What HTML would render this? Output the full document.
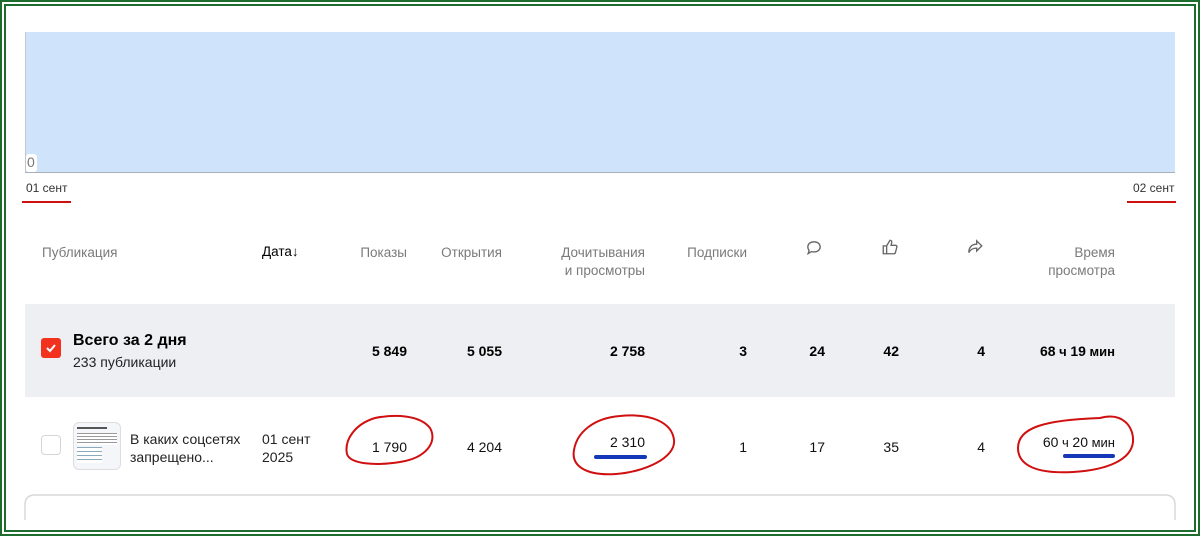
<!DOCTYPE html>
<html><head><meta charset="utf-8"><style>
*{margin:0;padding:0;box-sizing:border-box}
body{width:1200px;height:536px;background:#fff;font-family:"Liberation Sans",sans-serif;position:relative;overflow:hidden}
.a{position:absolute;white-space:nowrap}
.h{color:#7a7a7a;font-size:13.5px;line-height:18px}
.r{text-align:right}
.b{font-weight:bold;font-size:14px;color:#000}
.n{font-size:14px;color:#111}
</style></head><body>
<div class="a" style="left:0;top:0;width:1200px;height:536px;border:2px solid #1d6b2d"></div>
<div class="a" style="left:4px;top:4px;width:1192px;height:528px;border:2px solid #1d6b2d"></div>

<div class="a" style="left:25px;top:32px;width:1150px;height:141px;background:#cfe4fb;border-left:1px solid #c0c6ce;border-bottom:1px solid #a9b0b8"></div>
<div class="a" style="left:26px;top:154px;width:11px;height:18px;background:#fff;border-radius:3px;color:#777;font-size:14px;padding-left:1px">0</div>
<div class="a" style="left:26px;top:181px;font-size:12px;color:#333">01 сент</div>
<div class="a" style="left:22px;top:201px;width:49px;height:2px;background:#d01010"></div>
<div class="a" style="left:1133px;top:181px;font-size:12px;color:#333">02 сент</div>
<div class="a" style="left:1127px;top:201px;width:49px;height:2px;background:#d01010"></div>

<div class="a h" style="left:42px;top:244px">Публикация</div>
<div class="a" style="left:262px;top:244px;font-size:13.5px;color:#000">Дата↓</div>
<div class="a h r" style="right:793px;top:244px">Показы</div>
<div class="a h r" style="right:698px;top:244px">Открытия</div>
<div class="a h r" style="right:555px;top:244px">Дочитывания<br>и просмотры</div>
<div class="a h r" style="right:453px;top:244px">Подписки</div>
<svg class="a" style="left:805px;top:239px" width="18" height="18" viewBox="0 0 16 16" fill="none" stroke="#666" stroke-width="1.2"><path d="M8 2.5c3.3 0 5.5 2 5.5 4.5S11.3 11.5 8 11.5c-.8 0-1.5-.1-2.2-.3L2.8 13l.8-2.8C2.9 9.3 2.5 8.2 2.5 7 2.5 4.5 4.7 2.5 8 2.5z"/></svg>
<svg class="a" style="left:881px;top:238px" width="18" height="18" viewBox="0 0 16 16" fill="none" stroke="#666" stroke-width="1.2"><path d="M2 7h3v7H2zM5 7l3-5c1.2 0 1.7.8 1.5 2L9 6.5h4c.8 0 1.3.7 1.1 1.5l-1.3 5c-.2.6-.7 1-1.3 1H5"/></svg>
<svg class="a" style="left:966px;top:238px" width="18" height="18" viewBox="0 0 16 16" fill="none" stroke="#666" stroke-width="1.2"><path d="M9.5 2.5L14 7l-4.5 4.5V9C6 9 4 10 2.5 13c0-4.5 2.5-7.5 7-7.5z"/></svg>
<div class="a h r" style="right:85px;top:244px">Время<br>просмотра</div>

<div class="a" style="left:25px;top:304px;width:1150px;height:93px;background:#edeff2"></div>
<div class="a" style="left:41px;top:338px;width:20px;height:20px;background:#f2321e;border-radius:3px"></div>
<svg class="a" style="left:41px;top:338px" width="20" height="20"><path d="M6 10l3 3 5-6" fill="none" stroke="#fff" stroke-width="2"/></svg>
<div class="a" style="left:73px;top:332px;font-size:16px;font-weight:bold">Всего за 2 дня</div>
<div class="a" style="left:73px;top:354px;font-size:14px;color:#222">233 публикации</div>
<div class="a b r" style="right:793px;top:343px">5 849</div>
<div class="a b r" style="right:698px;top:343px">5 055</div>
<div class="a b r" style="right:555px;top:343px">2 758</div>
<div class="a b r" style="right:453px;top:343px">3</div>
<div class="a b r" style="right:375px;top:343px">24</div>
<div class="a b r" style="right:301px;top:343px">42</div>
<div class="a b r" style="right:215px;top:343px">4</div>
<div class="a b r" style="right:85px;top:343px">68<span style="font-size:13px"> ч </span>19<span style="font-size:13px"> мин</span></div>

<div class="a" style="left:41px;top:435px;width:20px;height:20px;border:1px solid #d5d5d5;border-radius:4px"></div>
<div class="a" style="left:73px;top:422px;width:48px;height:48px;border-radius:6px;background:#f4f6f9;border:1px solid #ddd;overflow:hidden">
<div style="margin:4px 3px;height:2px;background:#555;width:30px"></div>
<div style="margin:2px 3px;height:12px;background:repeating-linear-gradient(#999 0 1px,#fff 1px 3px)"></div>
<div style="margin:2px 3px;height:16px;background:repeating-linear-gradient(#8ab 0 1px,#fff 1px 4px);width:25px"></div>
</div>
<div class="a" style="left:130px;top:430px;font-size:14px;color:#222;line-height:18px">В каких соцсетях<br>запрещено...</div>
<div class="a" style="left:262px;top:430px;font-size:14px;color:#222;line-height:18px">01 сент<br>2025</div>
<div class="a n r" style="right:793px;top:439px">1 790</div>
<div class="a n r" style="right:698px;top:439px">4 204</div>
<div class="a n r" style="right:555px;top:434px">2 310</div>
<div class="a n r" style="right:453px;top:439px">1</div>
<div class="a n r" style="right:375px;top:439px">17</div>
<div class="a n r" style="right:301px;top:439px">35</div>
<div class="a n r" style="right:215px;top:439px">4</div>
<div class="a n r" style="right:85px;top:434px">60<span style="font-size:13px"> ч </span>20<span style="font-size:13px"> мин</span></div>

<svg class="a" style="left:0;top:0" width="1200" height="536" fill="none">
<path d="M375 418c20-4 45-3 55 10 8 14-4 30-30 34-25 4-50 2-53-8-3-14 8-30 28-36z" stroke="#d01010" stroke-width="2"/>
<path d="M620 416c30-3 52 6 54 24 2 18-30 32-58 34-30 2-45-8-42-24 3-18 20-32 46-34z" stroke="#d01010" stroke-width="2"/>
<path d="M1100 418c22-6 34 8 33 24-2 18-26 28-60 30-35 2-55-6-55-24 0-20 25-28 82-30z" stroke="#d01010" stroke-width="2"/>
<path d="M596 457h49" stroke="#1438b8" stroke-width="4" stroke-linecap="round"/>
<path d="M1065 456h48" stroke="#1438b8" stroke-width="4" stroke-linecap="round"/>
<path d="M25 520V505q0-10 10-10h1130q10 0 10 10v15" stroke="#d8d8d8" stroke-width="1.5"/>
</svg>
</body></html>
